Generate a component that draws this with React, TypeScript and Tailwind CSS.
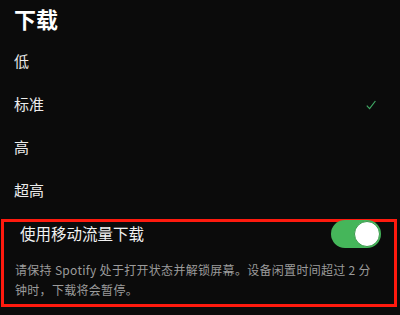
import React from "react";

const font = { fontFamily: '"Noto Sans CJK SC", "Noto Sans", sans-serif' };

export default function App() {
  const items = ["低", "标准", "高", "超高"];
  return (
    <div className="w-[400px] h-[315px] bg-[#0b0b0b] overflow-hidden" style={font}>
      <div className="h-[40px] pl-[14px] flex items-start">
        <span className="text-[22px] leading-[36px] font-bold text-white">下载</span>
      </div>
      {items.map((t) => (
        <div key={t} className="h-[43px] pl-[14px] pr-[24px] flex items-center justify-between">
          <span className="text-[15px] text-[#ececec]">{t}</span>
          {t === "标准" && (
            <svg width="10" height="10" viewBox="0 0 10 10" fill="none">
              <path d="M0.8 5.6 L3.6 8.6 L9.4 1" stroke="#3fa864" strokeWidth="1.2" />
            </svg>
          )}
        </div>
      ))}
      <div className="mt-[7px] ml-[1px] w-[396px] h-[88px] border-[3px] border-[#ff1a0e]">
        <div className="h-[24px] pl-[16px] pr-[13px] flex items-center justify-between">
          <span className="text-[15.5px] text-[#f2f2f2]">使用移动流量下载</span>
          <div className="w-[50px] h-[28px] rounded-full bg-[#45b65a] flex items-center justify-end pr-[1px]">
            <div className="w-[26px] h-[26px] rounded-full bg-white border border-[#3a9a4c]" />
          </div>
        </div>
        <div className="mt-[14px] pl-[11px] text-[12px] tracking-[0.3px] leading-[20px] text-[#9b9b9b]">
          请保持 Spotify 处于打开状态并解锁屏幕。设备闲置时间超过 2 分
          <br />
          钟时，下载将会暂停。
        </div>
      </div>
    </div>
  );
}
